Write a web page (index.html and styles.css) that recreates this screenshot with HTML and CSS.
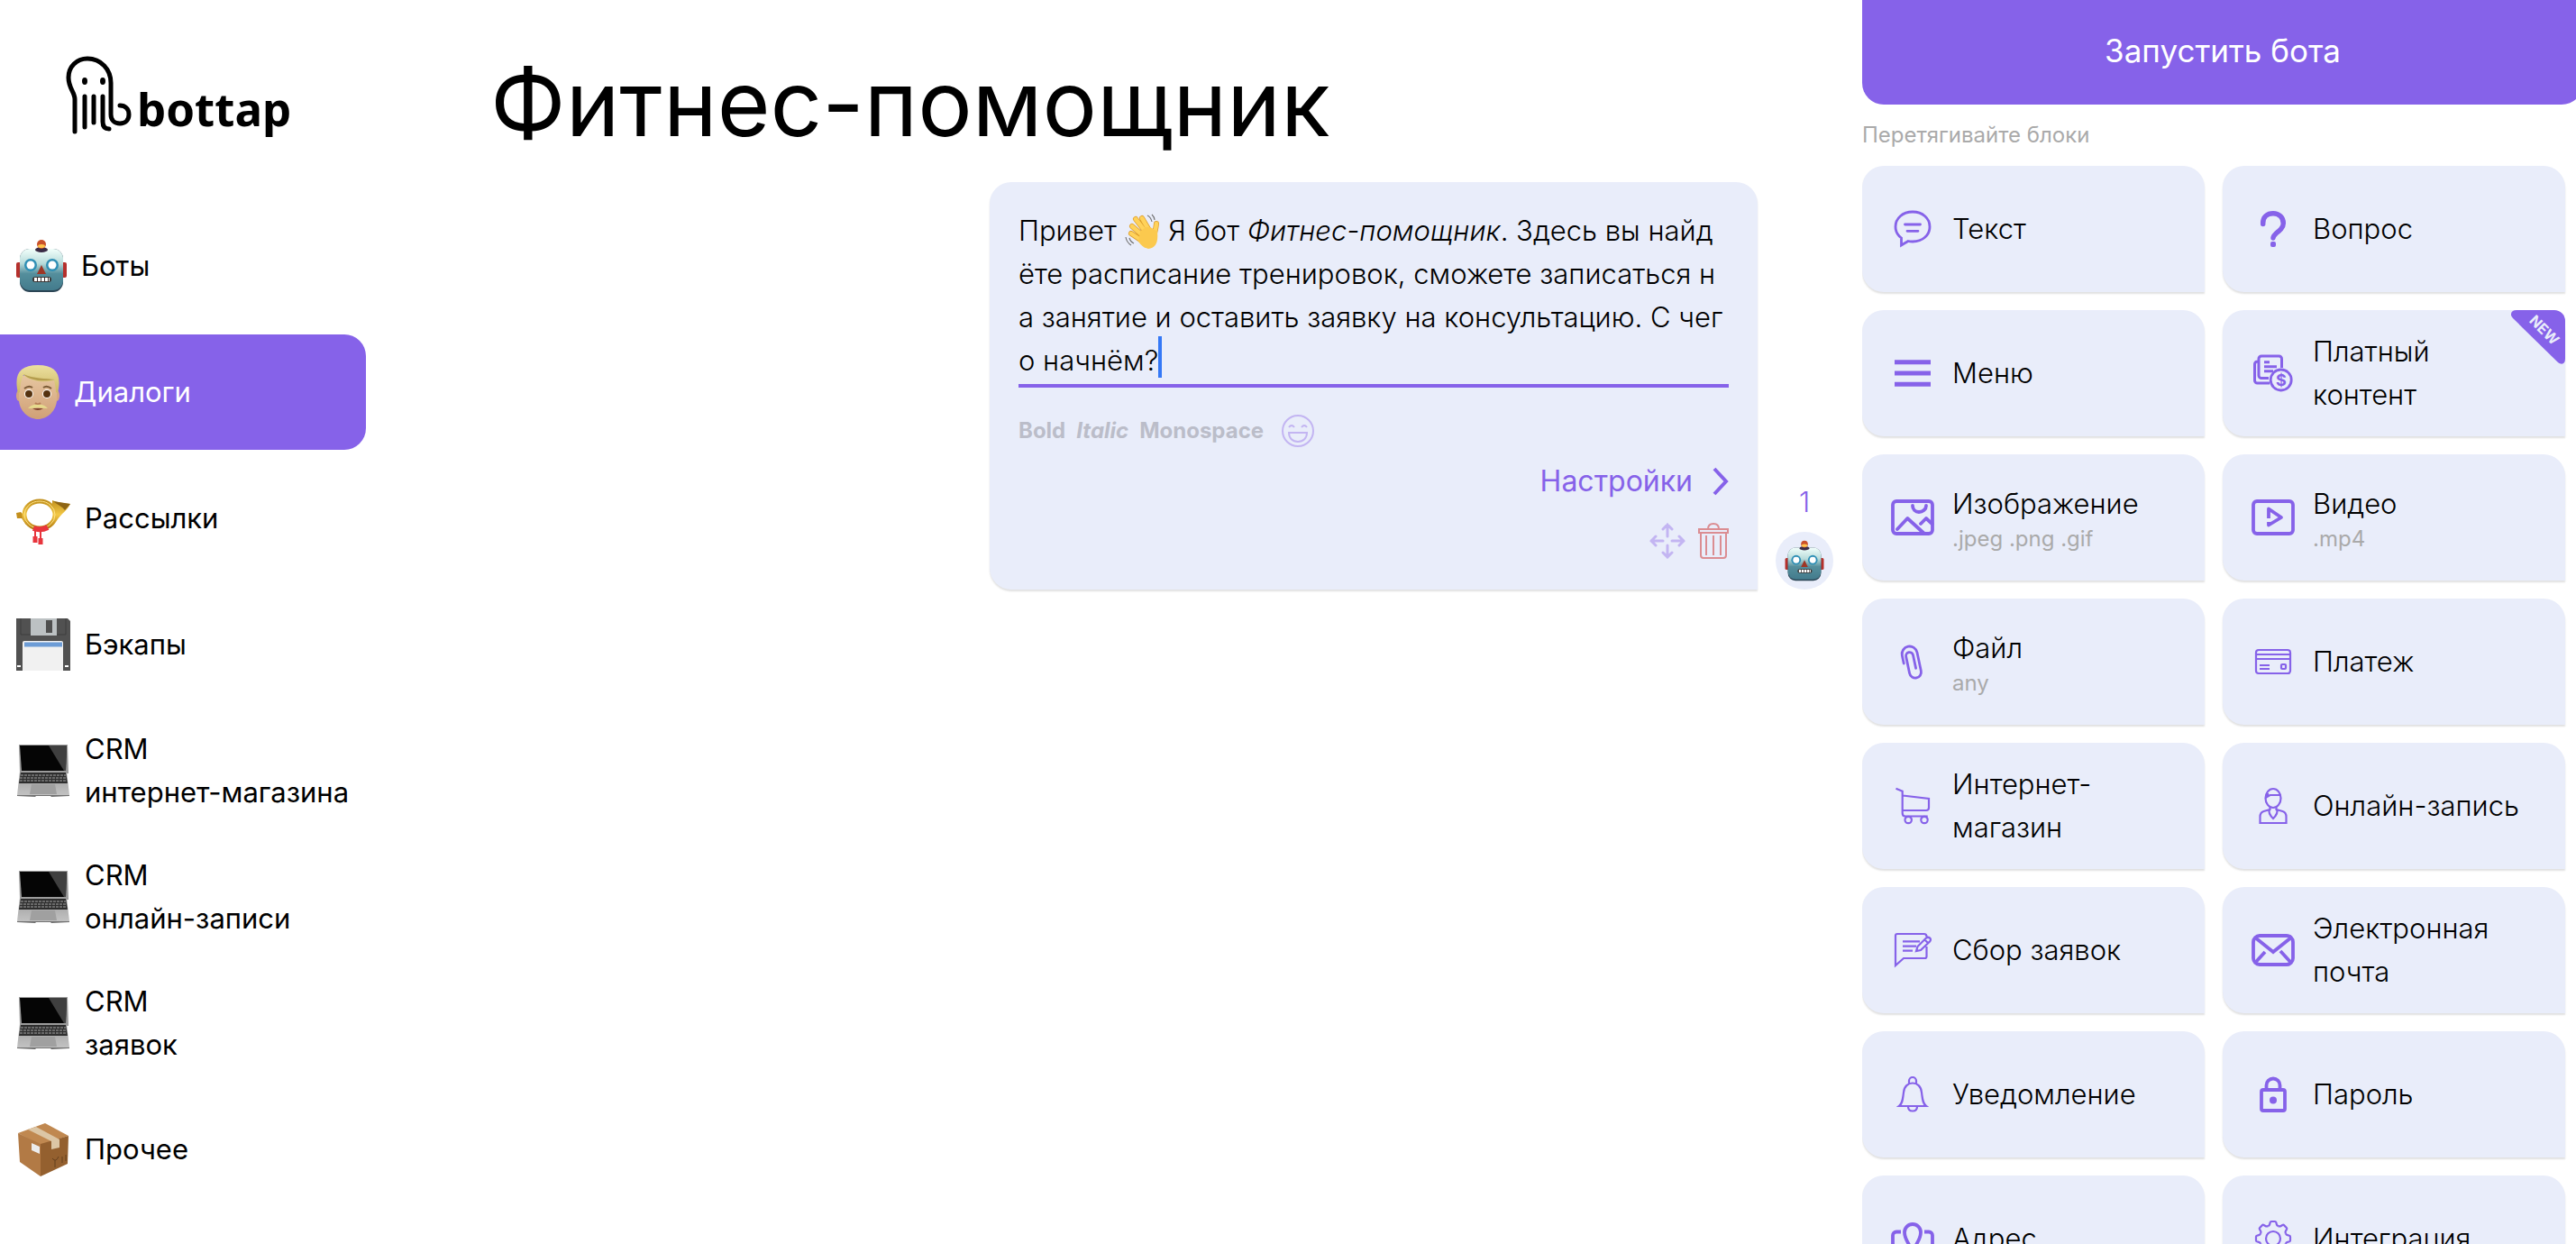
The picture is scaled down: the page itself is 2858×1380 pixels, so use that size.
FILE: index.html
```html
<!DOCTYPE html>
<html lang="ru">
<head>
<meta charset="utf-8">
<meta name="viewport" content="width=device-width, initial-scale=1">
<title>bottap — Фитнес-помощник</title>
<link rel="stylesheet" href="styles.css">
</head>
<body>
<svg class="sprite" aria-hidden="true">
  <defs>
    <linearGradient id="robot-skin" x1="0" y1="0" x2="0" y2="1"><stop offset="0" stop-color="#f2fffb"/><stop offset=".35" stop-color="#b9dcdb"/><stop offset=".6" stop-color="#548e9c"/><stop offset="1" stop-color="#437b8c"/></linearGradient>
    <linearGradient id="brass" x1="0" y1="0" x2="0" y2="1"><stop offset="0" stop-color="#c1901c"/><stop offset=".5" stop-color="#f3c846"/><stop offset="1" stop-color="#b57d10"/></linearGradient>
    <linearGradient id="skin" x1="0" y1="0" x2="0" y2="1"><stop offset="0" stop-color="#e6c5a0"/><stop offset="1" stop-color="#d0a076"/></linearGradient>
    <linearGradient id="hair" x1="0" y1="0" x2="0" y2="1"><stop offset="0" stop-color="#ece0a0"/><stop offset="1" stop-color="#cdb863"/></linearGradient>
    <linearGradient id="silver" x1="0" y1="0" x2="0" y2="1"><stop offset="0" stop-color="#9d9d9d"/><stop offset="1" stop-color="#c2c2c2"/></linearGradient>
  </defs>
  <symbol id="robot" viewBox="0 0 56 60">
    <rect x="0" y="26" width="8" height="17" rx="2" fill="#b5302c"/><rect x="48" y="26" width="8" height="17" rx="2" fill="#b5302c"/>
    <rect x="4" y="11" width="48" height="48" rx="11" fill="#2b4454"/>
    <rect x="4" y="11" width="48" height="46" rx="11" fill="url(#robot-skin)"/>
    <ellipse cx="28" cy="12" rx="7" ry="3" fill="#3a2b45"/><circle cx="28" cy="6" r="5" fill="#c9512b"/><ellipse cx="28" cy="8" rx="4" ry="2" fill="#ffc44d"/>
    <circle cx="16" cy="29" r="7" fill="#2f8fb5"/><circle cx="40" cy="29" r="7" fill="#2f8fb5"/>
    <circle cx="16" cy="29" r="4.500" fill="#fff"/><circle cx="40" cy="29" r="4.500" fill="#fff"/>
    <path d="M28 29l5 10H23z" fill="#9e3626"/>
    <rect x="18" y="42" width="21" height="6" rx="3" fill="#3b3433"/><path d="M20 45h17" stroke="#fff" stroke-width="4" stroke-dasharray="3 1"/>
  </symbol>
  <symbol id="laptop" viewBox="0 0 60 60">
    <path d="M3 1h54l1 32H4z" fill="#9b9b9b"/><path d="M4 2h52l-1 28H6z" fill="#050505"/><path d="M36 2h20l-1 28h-2z" fill="#3f3f3f"/>
    <path d="M4 31h52l3 26H1z" fill="url(#silver)"/><path d="M5 32h50l2 12H3z" fill="#2e2e2e"/>
    <path d="M5 35h50M4 38h52M4 41h52" stroke="#a5a5a5" stroke-width="1" stroke-dasharray="3 1"/>
    <path d="M17 45h26l2 11H15z" fill="#a0a0a0"/><path d="M1 57h58v1l-20 1-1-1H22l-1 1-20-1z" fill="#707070"/>
  </symbol>
</svg>

<div class="app">
  <aside class="sidebar">
    <a class="logo" href="#" aria-label="bottap">
      <svg class="logo-mark" viewBox="0 0 78 90" aria-hidden="true">
        <g fill="none" stroke="#000" stroke-width="5" stroke-linecap="round">
          <path d="M13 86V50C13 42 6 38 6 26 6 14 15 5 27 5c15 0 26 12 26 27v35c0 6 4 10 10 10s10-4 10-10-4-10-10-10"/>
          <path d="M24 47v34M34 47v29M44 47v28c0 5 2 8 7 8"/>
        </g>
        <ellipse cx="24" cy="30" rx="3" ry="4"/><ellipse cx="44" cy="30" rx="3" ry="4"/>
      </svg>
      <span class="logo-text">bottap</span>
    </a>
    <nav class="menu" aria-label="Основное меню">
      <a class="menu-item" href="#"><svg class="emoji emoji-robot" aria-hidden="true"><use href="#robot"/></svg><span>Боты</span></a>
      <a class="menu-item menu-item-active" href="#" aria-current="page">
        <svg class="emoji emoji-face" viewBox="0 0 48 60" aria-hidden="true">
          <ellipse cx="3" cy="34" rx="3" ry="6" fill="#d5a880"/><ellipse cx="45" cy="34" rx="3" ry="6" fill="#d5a880"/>
          <path d="M3 12h42v26c0 13-11 22-21 22S3 51 3 38z" fill="url(#skin)"/>
          <path d="M2 31C-3 10 4 0 24 0s27 10 22 31l-2-1c0-5-1-9-2-13-12 3-26 1-34-6-3 6-4 13-4 19z" fill="url(#hair)"/><path d="M8 10c6 7 22 9 35 6-10-1-24-1-35-6z" fill="#b59d4e"/>
          <path d="M9 26q5-4 9-1M30 25q4-3 9 1" fill="none" stroke="#7a5a35" stroke-width="2"/>
          <circle cx="14" cy="32" r="5" fill="#fff"/><circle cx="34" cy="32" r="5" fill="#fff"/><circle cx="14" cy="32" r="4" fill="#55320f"/><circle cx="34" cy="32" r="4" fill="#55320f"/>
          <path d="M21 42q3 3 6 0" fill="none" stroke="#b67f58" stroke-width="2"/><path d="M18 48q6 4 12 0" fill="#7b3f2a"/><path d="M13 48q5-5 11-4 6-1 11 4-6 0-11-1-5 1-11 1z" fill="#e6da8d"/>
        </svg><span>Диалоги</span></a>
      <a class="menu-item" href="#">
        <svg class="emoji" viewBox="0 0 60 60" aria-hidden="true">
          <path d="M0 24l5-1 5 5 4 7-3 2-5-7-5 0z" fill="#c38f1d"/>
          <path d="M40 10c7 3 13 3 20 4-4 8-10 11-14 17-3 5-6 9-12 11l-2-4c8-4 11-11 8-20z" fill="url(#brass)"/><path d="M41 11l19 3-6 7c-3-4-8-6-13-10z" fill="#8e6514"/>
          <ellipse cx="26" cy="26" rx="17" ry="15" fill="none" stroke="url(#brass)" stroke-width="5"/><ellipse cx="26" cy="26" rx="17" ry="15" fill="none" stroke="#ffe48a"/>
          <path d="M19 41q8 3 16-1" fill="none" stroke="#e8353d" stroke-width="6"/><path d="M21 43v10M27 43v11" stroke="#e8353d" stroke-width="2"/><path d="M21 50v7M27 52v7" stroke="#e8353d" stroke-width="5"/>
        </svg><span>Рассылки</span></a>
      <a class="menu-item" href="#">
        <svg class="emoji" viewBox="0 0 60 60" aria-hidden="true">
          <path d="M0 1h57l3 3v55H0z" fill="#515151"/><path d="M5 1v18h11M55 1v18H45" fill="none" stroke="#3f3f3f"/><path d="M16 1h29v19H16z" fill="#bcc1c3"/><path d="M33 3h7v14h-7z" fill="#4f4f4f"/>
          <path d="M7 28a2 2 0 0 1 2-2h41a2 2 0 0 1 2 2v31H7z" fill="#f1f1f1"/><path d="M9 30h42" stroke="#6c9cd6" stroke-width="5"/><path d="M1 54h4M54 54h4" stroke="#fff" stroke-width="2"/>
        </svg><span>Бэкапы</span></a>
      <a class="menu-item" href="#"><svg class="emoji" aria-hidden="true"><use href="#laptop"/></svg><span>CRM<br>интернет-магазина</span></a>
      <a class="menu-item" href="#"><svg class="emoji" aria-hidden="true"><use href="#laptop"/></svg><span>CRM<br>онлайн-записи</span></a>
      <a class="menu-item" href="#"><svg class="emoji" aria-hidden="true"><use href="#laptop"/></svg><span>CRM<br>заявок</span></a>
      <a class="menu-item" href="#">
        <svg class="emoji" viewBox="0 0 60 60" aria-hidden="true">
          <path d="M2 12L32 1l26 14-31 10z" fill="#c08850"/><path d="M2 12l25 12v36L4 44z" fill="#b27a45"/><path d="M27 24l31-9-1 31-30 14z" fill="#94602f"/>
          <path d="M13 8l9-3 26 14v9l-9 2v-9z" fill="#dcc6a5"/><path d="M17 23l9 4v8l-9-4z" fill="#ececec"/><path d="M40 40q4 5 7-2M43 42v8M51 38v7M55 36v7" fill="none" stroke="#63401f"/>
        </svg><span>Прочее</span></a>
    </nav>
  </aside>

  <main class="dialog">
    <h1 class="title">Фитнес-помощник</h1>
    <div class="message-row">
      <section class="message" aria-label="Сообщение 1">
        <div class="message-text" contenteditable="true" role="textbox" aria-multiline="true" aria-label="Текст сообщения">Привет <svg class="wave" viewBox="0 0 40 40" aria-hidden="true"><g fill="none" stroke-linecap="round" stroke-linejoin="round"><path d="M22 32L7 22M24 28L8 14M26 24L12 6M29 22L19 5M31 28q3-8 4-17" stroke="#dd9d2c" stroke-width="6"/><path d="M22 32L7 22M24 28L8 14M26 24L12 6M29 22L19 5M31 28q3-8 4-17" stroke="#ffd25a" stroke-width="4.500"/></g><path d="M17 20q8-8 13-4l6 4q2 18-10 19-6-1-11-8z" fill="#fbc94e"/><path d="M25 2q4 2 5 7M30 1q3 3 3 6M1 26q1 6 6 9M5 27q1 4 5 6" fill="none" stroke="#777" stroke-width="1.200"/></svg> Я бот <i>Фитнес-помощник</i>. Здесь вы найд<br>ёте расписание тренировок, сможете записаться н<br>а занятие и оставить заявку на консультацию. С чег<br>о начнём?<span class="caret"></span></div>
        <div class="format-bar">
          <button class="format" type="button">Bold</button>
          <button class="format format-italic" type="button">Italic</button>
          <button class="format" type="button">Monospace</button>
          <button class="smile" type="button" aria-label="Эмодзи"><svg viewBox="0 0 36 36" aria-hidden="true"><circle cx="18" cy="18" r="17"/><path d="M8 14q3-4 6 0M22 14q3-4 6 0M8 20h20c0 6-4 10-10 10S8 26 8 20z"/></svg></button>
        </div>
        <button class="settings" type="button">Настройки <svg viewBox="0 0 18 32" aria-hidden="true"><path d="M2 2l13 14L2 30"/></svg></button>
        <div class="actions">
          <button class="action action-move" type="button" aria-label="Переместить"><svg viewBox="0 0 40 40" aria-hidden="true"><path d="M20 15V2M15 7l5-5 5 5M20 25v13M15 33l5 5 5-5M15 20H2M7 15l-5 5 5 5M25 20h13M33 15l5 5-5 5"/></svg></button>
          <button class="action action-delete" type="button" aria-label="Удалить"><svg viewBox="0 0 34 40" aria-hidden="true"><path d="M1 7h32v4H1zM3 11v25a3 3 0 0 0 3 3h22a3 3 0 0 0 3-3V11M11 7C11 3 13 1 17 1s6 2 6 6M9 14v22M17 14v22M25 14v22"/></svg></button>
        </div>
      </section>
      <div class="author">
        <span class="number">1</span>
        <span class="avatar"><svg aria-hidden="true"><use href="#robot"/></svg></span>
      </div>
    </div>
  </main>

  <aside class="palette">
    <button class="launch" type="button">Запустить бота</button>
    <p class="hint">Перетягивайте блоки</p>
    <div class="blocks">
      <button class="block" type="button" draggable="true"><svg class="icon" viewBox="0 0 48 48"><path d="M24 5c11 0 19 7 19 16.500S35 38 24 38c-2 0-3 0-5-.5L11.500 42v-8C7.500 31 5 26.500 5 21.500 5 12 13 5 24 5z"/><path class="round" d="M15.500 19h17M18 26.300h12"/></svg><span>Текст</span></button>
      <button class="block" type="button" draggable="true"><svg class="icon" viewBox="0 0 48 48"><path d="M12.700 18.500v-1C12.700 10.500 17.500 6.700 24 6.700s11.300 4.500 11.300 11c0 5-3 7-6 9.500s-5 4.300-5.300 6.800" stroke-width="5.500" stroke-linecap="round"/><rect x="21" y="38" width="6" height="6" rx="2" fill="currentColor" stroke="none"/></svg><span>Вопрос</span></button>
      <button class="block" type="button" draggable="true"><svg class="icon" viewBox="0 0 48 48"><path d="M4 11.700h40M4 24h40M4 36.300h40" stroke-width="5"/></svg><span>Меню</span></button>
      <button class="block" type="button" draggable="true"><svg class="icon" viewBox="0 0 48 48"><path d="M33.500 18V8a3 3 0 0 0-3-3H11a3 3 0 0 0-3 3v18.500a3 3 0 0 0 3 3h8M8 11H6.500a3 3 0 0 0-3 3v18a3 3 0 0 0 3 3H20M14 11.700h6M14 16.700h14M14 21.700h10" stroke-width="3"/><circle cx="32.700" cy="31.500" r="11.500"/><text class="coin" x="33" y="38" text-anchor="middle">$</text></svg><span>Платный<br>контент</span><svg class="ribbon" viewBox="0 0 60 60"><path d="M6 0h42a12 12 0 0 1 12 12v42c0 6-4 7-8 4L2 9C-2 5 0 0 6 0z"/><text x="37" y="28" text-anchor="middle" transform="rotate(45 37 22)">NEW</text></svg></button>
      <button class="block" type="button" draggable="true"><svg class="icon" viewBox="0 0 48 48"><g stroke-width="3.800"><rect x="2" y="6" width="44" height="36" rx="4"/><path d="M24 11c0 4 3 7 7 7s8-3 8-7M7 37l11.300-12L37 42M33 31l6-6 6.500 6" stroke-linejoin="round" stroke-linecap="round"/></g></svg><span>Изображение<small>.jpeg .png .gif</small></span></button>
      <button class="block" type="button" draggable="true"><svg class="icon" viewBox="0 0 48 48"><g stroke-width="3.800"><rect x="2" y="6" width="44" height="36" rx="4"/><path d="M19 25V14.500L33 24l-14 8.500V29" stroke-linejoin="round"/></g></svg><span>Видео<small>.mp4</small></span></button>
      <button class="block" type="button" draggable="true"><svg class="icon" viewBox="0 0 48 48"><path d="M14 24v-9a8.500 8.500 0 0 1 17 0v21a6.500 6.500 0 0 1-13 0V17a4 4 0 0 1 8 0v15" transform="rotate(-12 24 24)" stroke-linecap="round"/></svg><span>Файл<small>any</small></span></button>
      <button class="block" type="button" draggable="true"><svg class="icon thin" viewBox="0 0 48 48"><rect x="5" y="11" width="38" height="26" rx="3"/><path d="M5 16h38M5 21h38M9 28h11M9 32h11"/><rect x="33" y="27" width="5" height="5" rx="1"/></svg><span>Платеж</span></button>
      <button class="block" type="button" draggable="true"><svg class="icon thin" viewBox="0 0 48 48"><path d="M5.500 4.700l7.200 3V32c0 2 1 3.500 3 3.500h25M13 12.500l29 3.500v10a3 3 0 0 1-3 3H13"/><circle cx="19.200" cy="39.500" r="3.700"/><circle cx="37" cy="39.500" r="3.700"/></svg><span>Интернет-<br>магазин</span></button>
      <button class="block" type="button" draggable="true"><svg class="icon thin" viewBox="0 0 48 48"><ellipse cx="24" cy="15.500" rx="8.500" ry="10.500"/><path d="M15.500 15l5-3h12M18 14v-4M20.500 25v3l-7 2c-3 1-4 3-4 6v7h29v-7c0-3-1-5-4-6l-7-2v-3M20 28c-2 4 2 8 4 10 2-2 6-6 4-10"/></svg><span>Онлайн-запись</span></button>
      <button class="block" type="button" draggable="true"><svg class="icon thin" viewBox="0 0 48 48"><path d="M39.500 9a3 3 0 0 0-3-3H7a2 2 0 0 0-2 2v33l9-8h23.500a2 2 0 0 0 2-2V20M13 14.300h19M13 19.700h15M13 24.700h11M28 25l1.500-5L39 10.500q2-1.500 4 0t0 4L33 24l-5 1zM37 12l4 4"/></svg><span>Сбор заявок</span></button>
      <button class="block" type="button" draggable="true"><svg class="icon" viewBox="0 0 48 48"><g stroke-width="3.800"><rect x="2" y="8" width="44" height="32" rx="7"/><path d="M4 10l20 16L44 10M4 38l11-12M44 38L32 25"/></g></svg><span>Электронная<br>почта</span></button>
      <button class="block" type="button" draggable="true"><svg class="icon thin" viewBox="0 0 48 48"><path d="M20 12V9a4 4 0 0 1 8 0v3M9 37c4-3 4-8 5-15 .5-7 5-10.500 10-10.500S33.500 15 34 22c1 7 1 12 5 15zM19 37.500c0 3 2 5 5 5s5-2 5-5"/></svg><span>Уведомление</span></button>
      <button class="block" type="button" draggable="true"><svg class="icon" viewBox="0 0 48 48"><g stroke-width="3.800"><rect x="11" y="19" width="26" height="23" rx="2"/><path d="M16.500 19v-5a7.500 7.500 0 0 1 15 0v5"/></g><circle cx="24" cy="30.500" r="4" fill="currentColor" stroke="none"/></svg><span>Пароль</span></button>
      <button class="block" type="button" draggable="true"><svg class="icon" viewBox="0 0 48 48"><g stroke-width="3.800"><path d="M24 37c-3-5-9-12-9-20a9 9 0 0 1 18 0c0 8-6 15-9 20z"/><path d="M11 16.500H6a4 4 0 0 0-4 4V42h44V20.500a4 4 0 0 0-4-4h-5"/></g></svg><span>Адрес</span></button>
      <button class="block" type="button" draggable="true"><svg class="icon thin" viewBox="0 0 48 48"><defs><path id="tooth" d="M-5.740-13.860Q-4-14.600-3.800-16L-3.300-18q.3-1 1.300-1H2q1 0 1.300 1L3.800-16Q4-14.600 5.740-13.860"/></defs><g transform="translate(24 24)"><use href="#tooth"/><use href="#tooth" transform="rotate(45)"/><use href="#tooth" transform="rotate(90)"/><use href="#tooth" transform="rotate(135)"/><use href="#tooth" transform="rotate(180)"/><use href="#tooth" transform="rotate(225)"/><use href="#tooth" transform="rotate(270)"/><use href="#tooth" transform="rotate(315)"/><circle r="8"/></g></svg><span>Интеграция</span></button>
    </div>
  </aside>
</div>
</body>
</html>
```
FILE: styles.css
```css
:root {
  --accent: #8662e9;
  --surface: #e9edfa;
  --muted: #aaa;
  --radius: 24px;
}

* { box-sizing: border-box; }

body {
  margin: 0;
  overflow: hidden;
  background: #fff;
  color: #000;
  font-family: Inter, "Open Sans", "Liberation Sans", sans-serif;
  font-size: 31px;
  line-height: 48px;
}

button {
  margin: 0;
  padding: 0;
  border: 0;
  background: none;
  color: inherit;
  font: inherit;
  cursor: pointer;
}

a { color: inherit; text-decoration: none; }

.sprite { position: absolute; width: 0; height: 0; }

.app {
  display: grid;
  grid-template-columns: 406px minmax(0, 1fr) 800px;
  height: 100vh;
  margin-right: -8px;
  overflow: hidden;
}

/* Sidebar */
.logo {
  display: flex;
  align-items: flex-start;
  gap: 4px;
  height: 231px;
  padding: 60px 0 0 70px;
}
.logo-mark { flex: none; width: 78px; height: 90px; }
.logo-text {
  padding-top: 36px;
  font-family: "Noto Sans", sans-serif;
  font-size: 51px;
  font-weight: 700;
}

.menu { display: flex; flex-direction: column; gap: 12px; }
.menu-item {
  display: flex;
  align-items: center;
  gap: 16px;
  min-height: 128px;
  padding-left: 18px;
  border-radius: 0 var(--radius) var(--radius) 0;
  white-space: nowrap;
}
.menu-item-active { background: var(--accent); color: #fff; }
.emoji { flex: none; width: 60px; height: 60px; }
.emoji-robot { width: 56px; }
.emoji-face { width: 48px; }

/* Dialog */
.dialog { padding: 42px 32px 0 0; }
.title {
  margin: 0 0 16px;
  padding-left: 138px;
  font-size: 101px;
  font-weight: 400;
  line-height: 144px;
  white-space: nowrap;
}
.message-row {
  display: flex;
  justify-content: flex-end;
  align-items: flex-end;
  gap: 20px;
}
.message {
  display: flex;
  flex-direction: column;
  width: 852px;
  padding: 30px 32px 34px;
  border-radius: var(--radius) var(--radius) 0 var(--radius);
  background: var(--surface);
  box-shadow: 0 2px 2px rgba(0, 0, 0, .12);
}
.message-text {
  padding-bottom: 2px;
  border-bottom: 4px solid var(--accent);
  outline: 0;
  font-weight: 300;
  white-space: nowrap;
}
.wave {
  width: 40px;
  height: 40px;
  margin: -4px 0;
  vertical-align: -6px;
}
.caret {
  display: inline-block;
  width: 4px;
  height: 46px;
  margin: -8px -4px 0 0;
  background: #3478f6;
  vertical-align: -8px;
}
.format-bar {
  display: flex;
  align-items: center;
  gap: 12px;
  margin-top: 24px;
  color: #bbbdc9;
  font-size: 24px;
}
.format { font-weight: 700; }
.format-italic { font-style: italic; }
.smile { display: flex; margin-left: 8px; }
.smile svg, .action svg, .settings svg, .icon {
  fill: none;
  stroke: currentColor;
  stroke-width: 2;
}
.smile svg { width: 36px; height: 36px; color: #c3b5f2; }
.settings {
  display: flex;
  align-items: center;
  align-self: flex-end;
  gap: 22px;
  margin-top: 8px;
  color: var(--accent);
  font-size: 32px;
}
.settings svg { width: 18px; height: 32px; stroke-width: 4; }
.actions {
  display: flex;
  justify-content: flex-end;
  gap: 14px;
  margin-top: 22px;
}
.action { display: flex; }
.action svg { height: 40px; }
.action-move { color: #c3b5f2; }
.action-move svg { width: 40px; stroke-width: 3; stroke-linecap: round; }
.action-delete { color: #db8d92; }
.action-delete svg { width: 34px; }

.author {
  display: flex;
  flex-direction: column;
  align-items: center;
  gap: 9px;
}
.number { color: var(--accent); font-weight: 300; }
.avatar {
  display: grid;
  place-items: center;
  width: 64px;
  height: 64px;
  border-radius: 50%;
  background: var(--surface);
}
.avatar svg { width: 44px; height: 46px; }

/* Block palette */
.palette { display: flex; flex-direction: column; min-height: 0; overflow: hidden; }
.launch {
  flex: none;
  height: 116px;
  padding-bottom: 4px;
  border-radius: 0 0 var(--radius) var(--radius);
  background: var(--accent);
  color: #fff;
  font-size: 35px;
}
.hint {
  margin: 0;
  padding: 10px 0;
  color: var(--muted);
  font-size: 24px;
}
.blocks {
  display: grid;
  grid-template-columns: repeat(2, minmax(0, 1fr));
  gap: 20px;
  margin-right: 20px;
}
.block {
  position: relative;
  display: flex;
  align-items: center;
  gap: 20px;
  height: 140px;
  padding-left: 32px;
  border-radius: var(--radius) var(--radius) 0 var(--radius);
  background: var(--surface);
  box-shadow: 0 2px 2px rgba(0, 0, 0, .12);
  font-weight: 300;
  text-align: left;
  white-space: nowrap;
  cursor: grab;
}
.block small {
  display: block;
  color: var(--muted);
  font-size: 24px;
  font-weight: 400;
  line-height: 30px;
}
.icon {
  flex: none;
  width: 48px;
  height: 48px;
  color: var(--accent);
  stroke-width: 2.8;
}
.icon.thin { stroke-width: 2.2; }
.round { stroke-linecap: round; }
.coin { fill: currentColor; stroke: none; font-size: 18px; font-weight: 700; }
.ribbon {
  position: absolute;
  top: 0;
  right: 0;
  width: 60px;
  height: 60px;
  fill: var(--accent);
}
.ribbon text { fill: #e9edfa; font-size: 16px; font-weight: 700; }
```
